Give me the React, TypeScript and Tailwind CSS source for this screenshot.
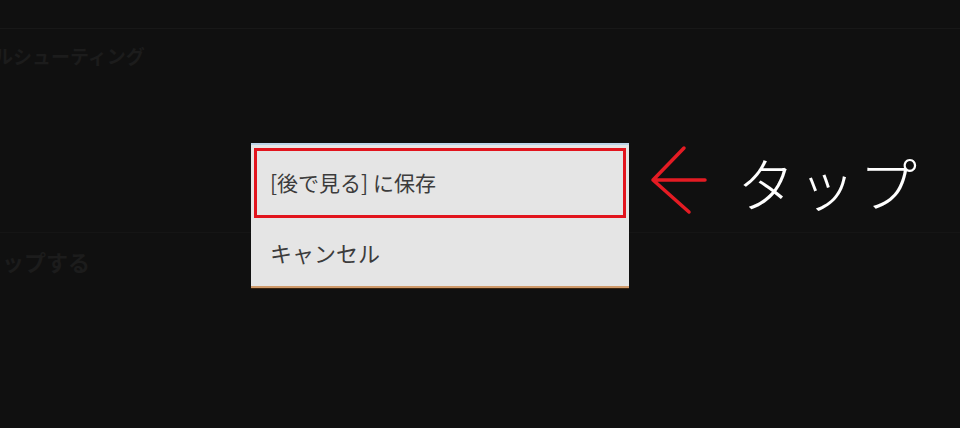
import React from "react";

const jp = "font-['Noto_Sans_CJK_JP','Noto_Sans',sans-serif]";

// settings rows that sit behind the popup
function SettingRow({
   label,
   shift,
   size,
   height,
}: {
   label: string;
   shift: string;
   size: string;
   height: string;
}) {
   return (
      <div className={`${height} flex items-center overflow-hidden`}>
         <span className={`${jp} ${shift} ${size} whitespace-nowrap text-[#1c1c1c] font-bold`}>{label}</span>
      </div>
   );
}

function LeftArrow() {
   return (
      <svg width="58" height="70" viewBox="0 0 58 70" className="mt-[2px]">
         <path
            d="M35 3 L4 35 L40 67 M4 35 L56 35"
            fill="none"
            stroke="#e41b23"
            strokeWidth="3.5"
            strokeLinecap="round"
            strokeLinejoin="round"
         />
      </svg>
   );
}

export default function App() {
   return (
      <div className="relative w-full h-[428px] bg-[#101010] overflow-hidden">
         <div className="h-[29px] border-b border-[#181818]" />
         <SettingRow label="トラブルシューティング" shift="-ml-[63px]" size="text-[19px]" height="h-[54px]" />
         <div className="h-[150px] border-b border-[#151515]" />
         <SettingRow label="タップする" shift="-ml-[20px]" size="text-[22px]" height="h-[56px]" />

         {/* popup menu with the tap hint */}
         <div className="absolute inset-0 pl-[251px] pt-[143px] flex items-start">
            <div className="w-[378px] h-[145px] bg-[#e5e5e5] border-t-2 border-t-[#bcd3e6] border-b-2 border-b-[#cf9a6a] flex flex-col px-[3px] pt-[3px] shadow-[0_1px_0_#3a2410]">
               <div className="h-[70px] border-[3px] border-[#e2141d] flex items-center pl-[13px]">
                  <span className={`${jp} text-[21px] text-[#3c3c3c]`}>[後で見る] に保存</span>
               </div>
               <div className="flex-1 flex items-center pl-[16px]">
                  <span className={`${jp} text-[22px] text-[#3c3c3c]`}>キャンセル</span>
               </div>
            </div>
            <div className="ml-[20px] flex items-start">
               <LeftArrow />
               <span className={`${jp} ml-[30px] mt-[6px] text-[58px] leading-[66px] font-light text-white tracking-[3px]`}>
                  タップ
               </span>
            </div>
         </div>
      </div>
   );
}
